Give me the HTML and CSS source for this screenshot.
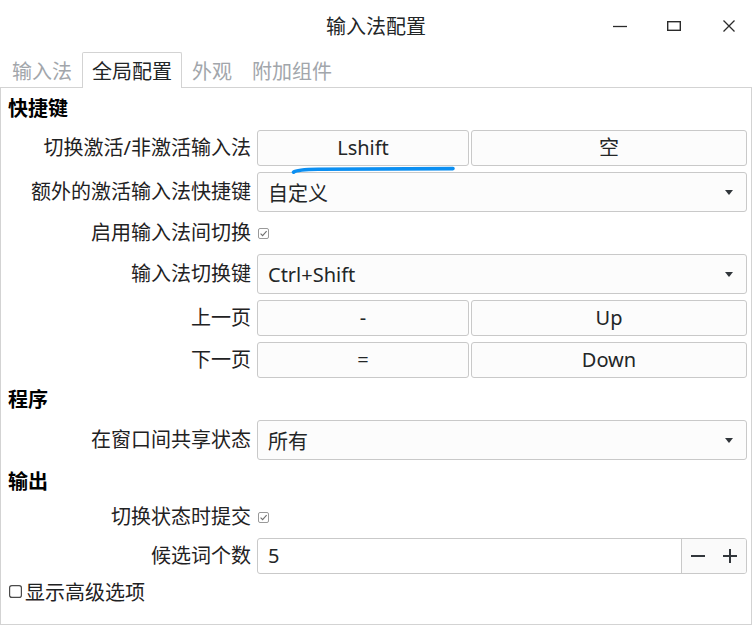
FILE: index.html
```html
<!DOCTYPE html>
<html lang="zh-CN">
<head>
<meta charset="utf-8">
<title>输入法配置</title>
<link rel="stylesheet" href="styles.css">
</head>
<body>
<div class="window">
  <header class="titlebar">
    <span></span>
    <span class="title">输入法配置</span>
    <div class="controls">
      <svg class="ic-min" width="14" height="14" viewBox="0 0 14 14"><path d="M0 7.5H14" stroke="#2b2b2b" stroke-width="1.3"/></svg>
      <svg class="ic-max" width="14" height="14" viewBox="0 0 14 14"><rect x="0.7" y="2.7" width="12.6" height="8.6" fill="none" stroke="#2b2b2b" stroke-width="1.4"/></svg>
      <svg class="ic-close" width="12" height="12" viewBox="0 0 12 12"><path d="M0.5 0.5L11.5 11.5M11.5 0.5L0.5 11.5" stroke="#2b2b2b" stroke-width="1.3"/></svg>
    </div>
  </header>

  <nav class="tabs">
    <div class="tab">输入法</div>
    <div class="tab active">全局配置</div>
    <div class="tab">外观</div>
    <div class="tab">附加组件</div>
  </nav>

  <main class="panel">
    <div class="section first">快捷键</div>

    <div class="row">
      <div class="label">切换激活/非激活输入法</div>
      <div class="pair">
        <div class="btn">Lshift</div>
        <div class="btn">空</div>
      </div>
    </div>

    <div class="row">
      <div class="label">额外的激活输入法快捷键</div>
      <div class="combo"><span>自定义</span><span class="arrow"></span></div>
    </div>

    <div class="row check-row">
      <div class="label">启用输入法间切换</div>
      <div class="field"><svg class="tick" width="11" height="11" viewBox="0 0 11 11"><rect x="0.5" y="0.5" width="10" height="10" rx="1.5" fill="#fff" stroke="#9a9a9a"/><path d="M2.6 5.6L4.6 7.6L8.6 3.2" fill="none" stroke="#6f6f6f" stroke-width="1.1"/></svg></div>
    </div>

    <div class="row">
      <div class="label">输入法切换键</div>
      <div class="combo"><span>Ctrl+Shift</span><span class="arrow"></span></div>
    </div>

    <div class="row">
      <div class="label">上一页</div>
      <div class="pair">
        <div class="btn">-</div>
        <div class="btn">Up</div>
      </div>
    </div>

    <div class="row">
      <div class="label">下一页</div>
      <div class="pair">
        <div class="btn">=</div>
        <div class="btn">Down</div>
      </div>
    </div>

    <div class="section">程序</div>

    <div class="row">
      <div class="label">在窗口间共享状态</div>
      <div class="combo"><span>所有</span><span class="arrow"></span></div>
    </div>

    <div class="section">输出</div>

    <div class="row check-row">
      <div class="label">切换状态时提交</div>
      <div class="field"><svg class="tick" width="11" height="11" viewBox="0 0 11 11"><rect x="0.5" y="0.5" width="10" height="10" rx="1.5" fill="#fff" stroke="#9a9a9a"/><path d="M2.6 5.6L4.6 7.6L8.6 3.2" fill="none" stroke="#6f6f6f" stroke-width="1.1"/></svg></div>
    </div>

    <div class="row">
      <div class="label">候选词个数</div>
      <div class="spin">
        <div class="spin-value">5</div>
        <div class="spin-buttons">
          <svg width="14" height="14" viewBox="0 0 14 14"><path d="M0 7H14" stroke="#31363b" stroke-width="2"/></svg>
          <svg width="14" height="14" viewBox="0 0 14 14"><path d="M0 7H14M7 0V14" stroke="#31363b" stroke-width="2"/></svg>
        </div>
      </div>
    </div>

    <div class="advanced">
      <svg width="13" height="13" viewBox="0 0 13 13"><rect x="0.6" y="0.6" width="11.8" height="11.8" rx="2.2" fill="#fff" stroke="#4a4a4a" stroke-width="1.2"/></svg>
      <span>显示高级选项</span>
    </div>
  </main>

  <svg class="annotation" width="752" height="625" viewBox="0 0 752 625"><path d="M293.5 172.2 Q297 169.6 318 169.3 L453 168.6" fill="none" stroke="#0b8ff2" stroke-width="3.6" stroke-linecap="round"/></svg>
</div>
</body>
</html>
```

FILE: styles.css
```css
* { box-sizing: border-box; }

html, body {
  margin: 0;
  padding: 0;
  background: #ffffff;
}

body {
  font-family: "Noto Sans", "Noto Sans CJK SC", sans-serif;
  font-size: 20px;
  color: #232627;
}

.window {
  position: relative;
  width: 752px;
  height: 625px;
  display: flex;
  flex-direction: column;
  background: #ffffff;
  overflow: hidden;
}

.titlebar {
  height: 52px;
  flex: none;
  display: grid;
  grid-template-columns: 1fr auto 1fr;
  align-items: center;
}

.title {
  font-size: 20px;
  line-height: 24px;
  color: #232627;
  padding-top: 2px;
}

.controls {
  justify-self: end;
  display: flex;
  align-items: center;
  gap: 40px;
  padding-right: 17px;
}

.controls svg { display: block; }
.ic-close { margin-left: 2px; }

.tabs {
  height: 35px;
  flex: none;
  display: flex;
  align-items: flex-end;
  padding-left: 2px;
}

.tab {
  height: 35px;
  padding: 3px 9px 0;
  line-height: 32px;
  color: #a2a6ab;
  border: 1px solid transparent;
  border-bottom: none;
}

.tab.active {
  position: relative;
  z-index: 1;
  height: 36px;
  margin-bottom: -1px;
  color: #232627;
  background: #ffffff;
  border-color: #d3d3d3;
  border-radius: 2px 2px 0 0;
}

.panel {
  flex: 1;
  border: 1px solid #d3d3d3;
  padding: 0 4px 0 7px;
  display: flex;
  flex-direction: column;
}

.section {
  height: 28px;
  line-height: 28px;
  margin-top: 8px;
  font-weight: bold;
  color: #000000;
}

.section.first {
  margin-top: 6px;
  height: 30px;
  line-height: 30px;
}

.row {
  display: grid;
  grid-template-columns: 243px 1fr;
  column-gap: 6px;
  align-items: center;
  margin-top: 6px;
}

.label {
  text-align: right;
  white-space: nowrap;
  line-height: 28px;
  color: #1f2223;
}

.check-row { height: 30px; }

.field {
  display: flex;
  align-items: center;
  height: 30px;
  padding-left: 1px;
}

.tick { display: block; }

.pair {
  display: grid;
  grid-template-columns: 212px 1fr;
  column-gap: 2px;
}

.btn {
  height: 36px;
  border: 1px solid #c9c9c9;
  border-radius: 3px;
  background: #fcfcfc;
  text-align: center;
  line-height: 34px;
  color: #232627;
}

.combo {
  height: 40px;
  border: 1px solid #c9c9c9;
  border-radius: 3px;
  background: #fcfcfc;
  display: flex;
  align-items: center;
  justify-content: space-between;
  padding: 0 13px 0 10px;
  color: #232627;
}

.arrow {
  width: 0;
  height: 0;
  border-left: 4.5px solid transparent;
  border-right: 4.5px solid transparent;
  border-top: 5px solid #31363b;
  margin-top: 1px;
}

.spin {
  height: 36px;
  border: 1px solid #c9c9c9;
  border-radius: 3px;
  background: #ffffff;
  display: flex;
  overflow: hidden;
}

.spin-value {
  flex: 1;
  padding-left: 10px;
  line-height: 34px;
  color: #232627;
}

.spin-buttons {
  width: 65px;
  border-left: 1px solid #c9c9c9;
  background: #fafafa;
  display: flex;
  align-items: center;
  gap: 18px;
  padding-left: 9px;
}

.spin-buttons svg { display: block; }

.advanced {
  display: flex;
  align-items: center;
  gap: 3px;
  height: 30px;
  margin-top: 2px;
  padding-left: 1px;
  color: #1f2223;
}

.advanced svg { display: block; }

.annotation {
  position: absolute;
  left: 0;
  top: 0;
  pointer-events: none;
}
```
